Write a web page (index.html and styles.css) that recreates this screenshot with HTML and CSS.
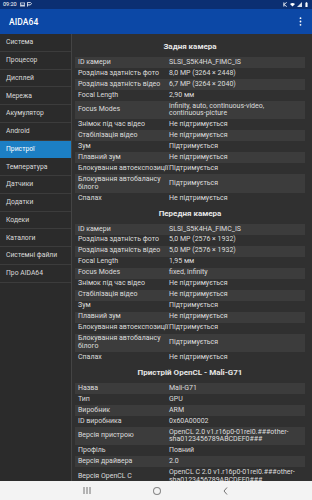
FILE: index.html
```html
<!DOCTYPE html>
<html lang="uk">
<head>
<meta charset="utf-8">
<title>AIDA64</title>
<link rel="stylesheet" href="styles.css">
</head>
<body>
<div class="screen">
  <div class="status">
    <div class="status-left">
      <span class="time">09:20</span>
      <svg class="sicon" viewBox="0 0 8 6" width="8" height="6"><rect x="0.5" y="0.5" width="7" height="5" fill="none" stroke="#fff" stroke-width="1"/><path d="M1 5 L3 2.5 L4.5 4 L5.5 3 L7 5 Z" fill="#fff"/></svg>
      <svg class="sicon" viewBox="0 0 6 6" width="6" height="6"><path d="M0.5 0.5 V5.5 M0.5 0.5 H4 L5.5 2 L4 3.5 H0.5" fill="none" stroke="#fff" stroke-width="1"/></svg>
    </div>
    <div class="status-right">
      <svg class="sicon" viewBox="0 0 6 6" width="6" height="6"><path d="M1 0.5 V5.5 M1 3 L4.5 0.5 M1 3 L4.5 5.5" fill="none" stroke="#fff" stroke-width="1"/></svg>
      <svg class="sicon" viewBox="0 0 8 6" width="8" height="6"><path d="M0 2 Q4 -1 8 2 L4 6 Z" fill="#fff"/></svg>
      <svg class="sicon" viewBox="0 0 6 6" width="6" height="6"><path d="M0 6 L6 0 V6 Z" fill="#fff" opacity="0.85"/></svg>
      <svg class="sicon" viewBox="0 0 4 7" width="4" height="7"><rect x="1.3" y="0" width="1.4" height="1" fill="#fff"/><rect x="0.5" y="1" width="3" height="6" fill="#fff"/></svg>
    </div>
  </div>
  <div class="appbar">
    <span class="app-title">AIDA64</span>
    <svg class="kebab" viewBox="0 0 3 9" width="3" height="9"><circle cx="1.5" cy="1.2" r="0.9" fill="#fff"/><circle cx="1.5" cy="4.5" r="0.9" fill="#fff"/><circle cx="1.5" cy="7.8" r="0.9" fill="#fff"/></svg>
  </div>
  <div class="main">
    <nav class="sidebar">
      <div class="nav-item">Система</div>
      <div class="nav-item">Процесор</div>
      <div class="nav-item">Дисплей</div>
      <div class="nav-item">Мережа</div>
      <div class="nav-item">Акумулятор</div>
      <div class="nav-item">Android</div>
      <div class="nav-item active">Пристрої</div>
      <div class="nav-item">Температура</div>
      <div class="nav-item">Датчики</div>
      <div class="nav-item">Додатки</div>
      <div class="nav-item">Кодеки</div>
      <div class="nav-item">Каталоги</div>
      <div class="nav-item">Системні файли</div>
      <div class="nav-item">Про AIDA64</div>
    </nav>
    <div class="content">
      <h2 class="section-title">Задня камера</h2>
      <div class="table">
        <div class="row"><span>ID камери</span><span>SLSI_S5K4HA_FIMC_IS</span></div>
        <div class="row"><span>Розділна здатність фото</span><span>8,0 MP (3264 × 2448)</span></div>
        <div class="row"><span>Розділна здатність відео</span><span>6,7 MP (3264 × 2040)</span></div>
        <div class="row"><span>Focal Length</span><span>2,90 мм</span></div>
        <div class="row"><span>Focus Modes</span><span>infinity, auto, continuous-video, continuous-picture</span></div>
        <div class="row"><span>Знімок під час відео</span><span>Не підтримується</span></div>
        <div class="row"><span>Стабілізація відео</span><span>Не підтримується</span></div>
        <div class="row"><span>Зум</span><span>Підтримується</span></div>
        <div class="row"><span>Плавний зум</span><span>Не підтримується</span></div>
        <div class="row"><span>Блокування автоекспозиції</span><span>Підтримується</span></div>
        <div class="row"><span>Блокування автобалансу білого</span><span>Підтримується</span></div>
        <div class="row"><span>Спалах</span><span>Не підтримується</span></div>
      </div>
      <h2 class="section-title">Передня камера</h2>
      <div class="table">
        <div class="row"><span>ID камери</span><span>SLSI_S5K4HA_FIMC_IS</span></div>
        <div class="row"><span>Розділна здатність фото</span><span>5,0 MP (2576 × 1932)</span></div>
        <div class="row"><span>Розділна здатність відео</span><span>5,0 MP (2576 × 1932)</span></div>
        <div class="row"><span>Focal Length</span><span>1,95 мм</span></div>
        <div class="row"><span>Focus Modes</span><span>fixed, infinity</span></div>
        <div class="row"><span>Знімок під час відео</span><span>Не підтримується</span></div>
        <div class="row"><span>Стабілізація відео</span><span>Не підтримується</span></div>
        <div class="row"><span>Зум</span><span>Підтримується</span></div>
        <div class="row"><span>Плавний зум</span><span>Не підтримується</span></div>
        <div class="row"><span>Блокування автоекспозиції</span><span>Підтримується</span></div>
        <div class="row"><span>Блокування автобалансу білого</span><span>Підтримується</span></div>
        <div class="row"><span>Спалах</span><span>Не підтримується</span></div>
      </div>
      <h2 class="section-title">Пристрій OpenCL - Mali-G71</h2>
      <div class="table">
        <div class="row"><span>Назва</span><span>Mali-G71</span></div>
        <div class="row"><span>Тип</span><span>GPU</span></div>
        <div class="row"><span>Виробник</span><span>ARM</span></div>
        <div class="row"><span>ID виробника</span><span>0x60A00002</span></div>
        <div class="row"><span>Версія пристрою</span><span>OpenCL 2.0 v1.r16p0-01rel0.###other-sha0123456789ABCDEF0###</span></div>
        <div class="row"><span>Профіль</span><span>Повний</span></div>
        <div class="row"><span>Версія драйвера</span><span>2.0</span></div>
        <div class="row"><span>Версія OpenCL C</span><span>OpenCL C 2.0 v1.r16p0-01rel0.###other-sha0123456789ABCDEF0###</span></div>
      </div>
    </div>
  </div>
  <div class="navbar">
    <svg viewBox="0 0 8 7" width="8" height="7"><path d="M1 0 V7 M4 0 V7 M7 0 V7" stroke="#666" stroke-width="0.9"/></svg>
    <svg viewBox="0 0 8 8" width="8" height="8"><rect x="0.6" y="0.6" width="6.8" height="6.8" rx="2.6" fill="none" stroke="#666" stroke-width="0.9"/></svg>
    <svg viewBox="0 0 5 8" width="5" height="8"><path d="M4 0.5 L1 4 L4 7.5" fill="none" stroke="#666" stroke-width="0.9"/></svg>
  </div>
</div>
</body>
</html>
```
FILE: styles.css
```css
* { box-sizing: border-box; }
html, body { margin: 0; padding: 0; }
body {
  width: 312px;
  height: 500px;
  overflow: hidden;
  font-family: Roboto, "Noto Sans", "Liberation Sans", sans-serif;
  background: #303030;
}
.screen {
  display: flex;
  flex-direction: column;
  width: 312px;
  height: 500px;
}
.status {
  height: 9px;
  flex: none;
  background: #0b2f72;
  display: flex;
  justify-content: space-between;
  align-items: center;
  padding: 0 3px 0 3px;
}
.status-left, .status-right {
  display: flex;
  align-items: center;
  gap: 2px;
}
.time {
  color: #fff;
  font-size: 5.5px;
  line-height: 9px;
  margin-right: 1px;
}
.sicon { display: block; width: 5px; height: 5px; }
.appbar {
  height: 25px;
  flex: none;
  background: #0c48a6;
  display: flex;
  justify-content: space-between;
  align-items: center;
  padding: 0 10px 0 9px;
}
.app-title {
  color: #fff;
  font-size: 8.5px;
  font-weight: 500;
  letter-spacing: 0.1px;
}
.kebab { display: block; }
.main {
  flex: 1;
  display: flex;
  min-height: 0;
  overflow: hidden;
}
.sidebar {
  width: 72px;
  flex: none;
  background: #2b2b2b;
  border-right: 1px solid #444;
}
.nav-item {
  height: 17.75px;
  display: flex;
  align-items: center;
  padding-left: 6px;
  font-size: 6.8px;
  color: #dadada;
  border-bottom: 1px solid #3c3c3c;
  white-space: nowrap;
}
.nav-item.active {
  background: #1c7fc4;
  color: #fff;
  border-bottom-color: #1c7fc4;
}
.content {
  flex: 1;
  min-width: 0;
  background: #303030;
  padding: 3px 7px 0 3px;
  overflow: hidden;
}
.section-title {
  margin: 0;
  height: 20px;
  line-height: 20px;
  text-align: center;
  font-size: 8px;
  font-weight: 700;
  color: #e6e6e6;
}
.table {
  display: flex;
  flex-direction: column;
}
.row {
  display: grid;
  grid-template-columns: 91px 1fr;
  padding: 1.7px 3px;
  font-size: 7px;
  line-height: 7.6px;
  color: #dcdcdc;
  align-items: center;
}
.row:nth-child(odd) { background: #3c3c3c; }
.row span:last-child { overflow-wrap: anywhere; }
.navbar {
  height: 19px;
  flex: none;
  background: #f3f3f3;
  display: flex;
  align-items: center;
  padding-left: 83px;
  gap: 62px;
}
.navbar svg { display: block; }
```
